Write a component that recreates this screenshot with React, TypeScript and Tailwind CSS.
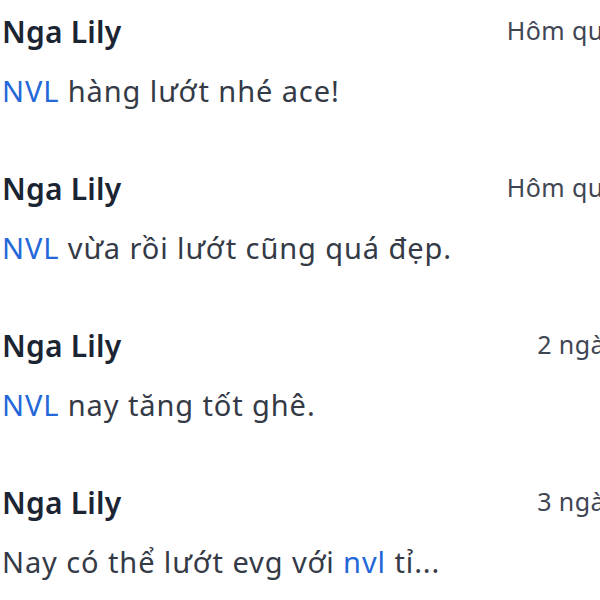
import React from "react";

type Comment = {
  name: string;
  time: string;
  parts: { text: string; tag?: boolean }[];
};

const comments: Comment[] = [
  {
    name: "Nga Lily",
    time: "Hôm qua",
    parts: [{ text: "NVL", tag: true }, { text: " hàng lướt nhé ace!" }],
  },
  {
    name: "Nga Lily",
    time: "Hôm qua",
    parts: [{ text: "NVL", tag: true }, { text: " vừa rồi lướt cũng quá đẹp." }],
  },
  {
    name: "Nga Lily",
    time: "2 ngày",
    parts: [{ text: "NVL", tag: true }, { text: " nay tăng tốt ghê." }],
  },
  {
    name: "Nga Lily",
    time: "3 ngày",
    parts: [
      { text: "Nay có thể lướt evg với " },
      { text: "nvl", tag: true },
      { text: " tỉ..." },
    ],
  },
];

const App: React.FC = () => {
  return (
    <div
      className="w-[600px] h-[600px] overflow-hidden bg-white"
      style={{ fontFamily: '"Noto Sans", "Open Sans", sans-serif' }}
    >
      <div className="w-[618px] pl-[2px] -mt-[1px] flex flex-col">
        {comments.map((c, i) => (
          <div key={i} className="h-[157px] flex flex-col">
            <div className="flex items-center justify-between h-[64px]">
              <span className="text-[30px] font-semibold text-[#1b2433] tracking-[0.2px]">
                {c.name}
              </span>
              <span className="text-[25px] text-[#3f4654] tracking-[0.4px]">
                {c.time}
              </span>
            </div>
            <p className="text-[29px] text-[#343a46] leading-[56px] tracking-[0.9px]">
              {c.parts.map((p, j) =>
                p.tag ? (
                  <span key={j} className="text-[#2467d8]">
                    {p.text}
                  </span>
                ) : (
                  <span key={j}>{p.text}</span>
                )
              )}
            </p>
          </div>
        ))}
      </div>
    </div>
  );
};

export default App;
